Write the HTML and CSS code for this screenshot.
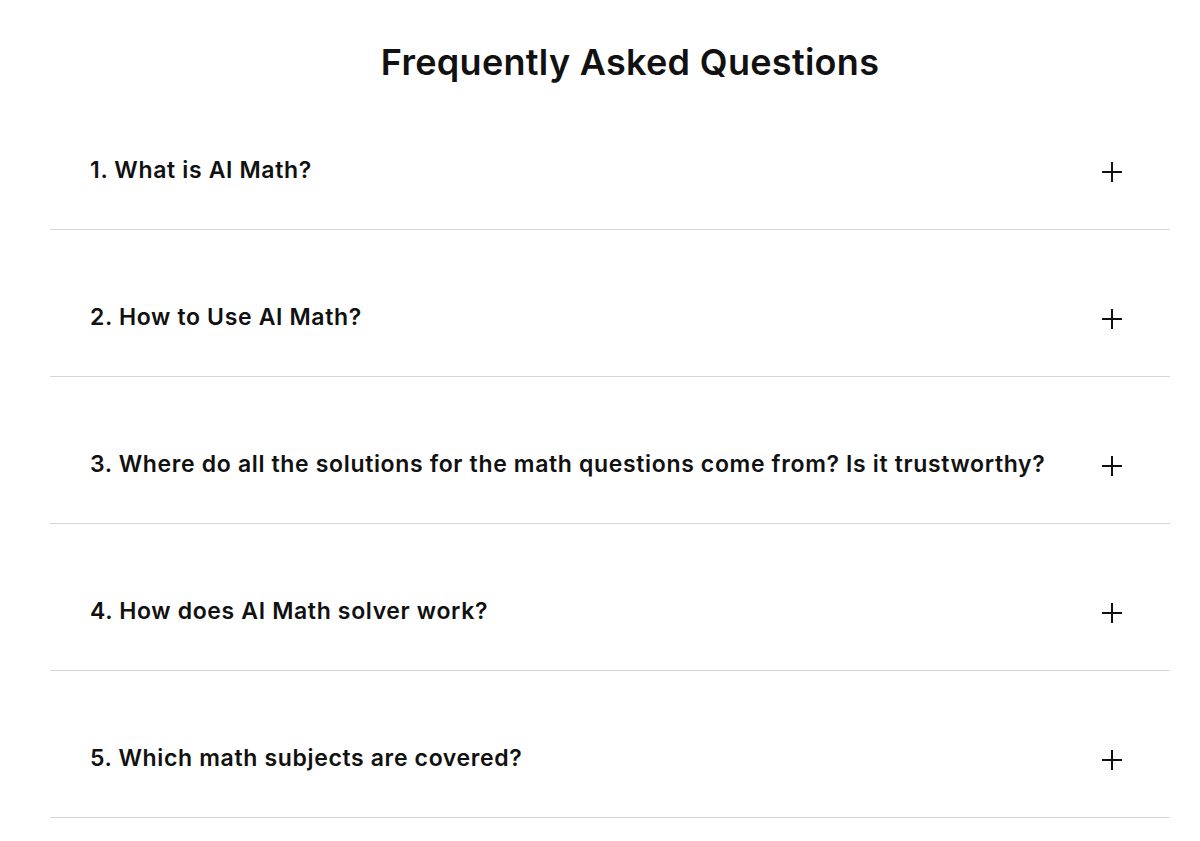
FILE: index.html
```html
<!DOCTYPE html>
<html lang="en">
<head>
    <meta charset="UTF-8" />
    <meta name="viewport" content="width=device-width, initial-scale=1" />
    <title>Frequently Asked Questions</title>
    <link rel="stylesheet" href="styles.css">
</head>
<body>
    <section class="faq">
        <h1>Frequently Asked Questions</h1>

        <div class="faq-list">
            <div class="faq-item">
                <span class="question">1. What is AI Math?</span>
                <svg class="plus" viewBox="0 0 20 20" aria-hidden="true"><path d="M10 0v20M0 10h20"/></svg>
            </div>
            <div class="faq-item">
                <span class="question">2. How to Use AI Math?</span>
                <svg class="plus" viewBox="0 0 20 20" aria-hidden="true"><path d="M10 0v20M0 10h20"/></svg>
            </div>
            <div class="faq-item">
                <span class="question">3. Where do all the solutions for the math questions come from? Is it trustworthy?</span>
                <svg class="plus" viewBox="0 0 20 20" aria-hidden="true"><path d="M10 0v20M0 10h20"/></svg>
            </div>
            <div class="faq-item">
                <span class="question">4. How does AI Math solver work?</span>
                <svg class="plus" viewBox="0 0 20 20" aria-hidden="true"><path d="M10 0v20M0 10h20"/></svg>
            </div>
            <div class="faq-item">
                <span class="question">5. Which math subjects are covered?</span>
                <svg class="plus" viewBox="0 0 20 20" aria-hidden="true"><path d="M10 0v20M0 10h20"/></svg>
            </div>
        </div>
    </section>
</body>
</html>
```

FILE: styles.css
```css
body {
    margin: 0;
    font-family: Inter, 'Noto Sans', sans-serif;
    background-color: #fff;
    color: #111;
}
.faq {
    margin: 0 30px 0 50px;
}
h1 {
    margin: 0;
    padding: 41px 0 0 40px;
    font-size: 36px;
    line-height: 42px;
    font-weight: 600;
    text-align: center;
    letter-spacing: 0.3px;
}
.faq-item {
    display: flex;
    align-items: center;
    justify-content: space-between;
    padding: 73px 48px 45px 40px;
    border-bottom: 1px solid #d6d6d6;
}
.question {
    font-size: 23px;
    line-height: 28px;
    font-weight: 600;
    letter-spacing: 0.65px;
}
.plus {
    width: 20px;
    height: 20px;
    flex-shrink: 0;
    margin-top: 4px;
    stroke: #111;
    stroke-width: 2;
    fill: none;
}
```
